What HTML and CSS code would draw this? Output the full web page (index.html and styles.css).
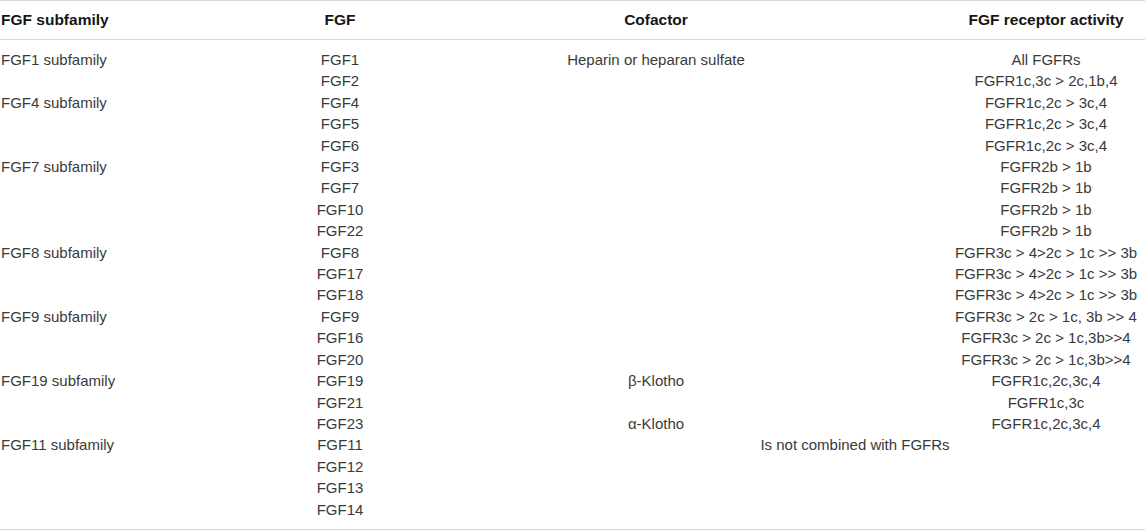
FILE: index.html
```html
<!DOCTYPE html>
<html lang="en">
<head>
<meta charset="utf-8">
<title>FGF subfamilies</title>
<link rel="stylesheet" href="styles.css">
</head>
<body>
<table class="fgf-table">
  <colgroup>
    <col class="c1">
    <col class="c2">
    <col class="c3">
    <col class="c4">
  </colgroup>
  <thead>
    <tr>
      <th class="left">FGF subfamily</th>
      <th>FGF</th>
      <th>Cofactor</th>
      <th>FGF receptor activity</th>
    </tr>
  </thead>
  <tbody>
    <tr class="first"><td class="left">FGF1 subfamily</td><td>FGF1</td><td>Heparin or heparan sulfate</td><td>All FGFRs</td></tr>
    <tr><td class="left"></td><td>FGF2</td><td></td><td>FGFR1c,3c &gt; 2c,1b,4</td></tr>
    <tr><td class="left">FGF4 subfamily</td><td>FGF4</td><td></td><td>FGFR1c,2c &gt; 3c,4</td></tr>
    <tr><td class="left"></td><td>FGF5</td><td></td><td>FGFR1c,2c &gt; 3c,4</td></tr>
    <tr><td class="left"></td><td>FGF6</td><td></td><td>FGFR1c,2c &gt; 3c,4</td></tr>
    <tr><td class="left">FGF7 subfamily</td><td>FGF3</td><td></td><td>FGFR2b &gt; 1b</td></tr>
    <tr><td class="left"></td><td>FGF7</td><td></td><td>FGFR2b &gt; 1b</td></tr>
    <tr><td class="left"></td><td>FGF10</td><td></td><td>FGFR2b &gt; 1b</td></tr>
    <tr><td class="left"></td><td>FGF22</td><td></td><td>FGFR2b &gt; 1b</td></tr>
    <tr><td class="left">FGF8 subfamily</td><td>FGF8</td><td></td><td>FGFR3c &gt; 4&gt;2c &gt; 1c &gt;&gt; 3b</td></tr>
    <tr><td class="left"></td><td>FGF17</td><td></td><td>FGFR3c &gt; 4&gt;2c &gt; 1c &gt;&gt; 3b</td></tr>
    <tr><td class="left"></td><td>FGF18</td><td></td><td>FGFR3c &gt; 4&gt;2c &gt; 1c &gt;&gt; 3b</td></tr>
    <tr><td class="left">FGF9 subfamily</td><td>FGF9</td><td></td><td>FGFR3c &gt; 2c &gt; 1c, 3b &gt;&gt; 4</td></tr>
    <tr><td class="left"></td><td>FGF16</td><td></td><td>FGFR3c &gt; 2c &gt; 1c,3b&gt;&gt;4</td></tr>
    <tr><td class="left"></td><td>FGF20</td><td></td><td>FGFR3c &gt; 2c &gt; 1c,3b&gt;&gt;4</td></tr>
    <tr><td class="left">FGF19 subfamily</td><td>FGF19</td><td>β-Klotho</td><td>FGFR1c,2c,3c,4</td></tr>
    <tr><td class="left"></td><td>FGF21</td><td></td><td>FGFR1c,3c</td></tr>
    <tr><td class="left"></td><td>FGF23</td><td>α-Klotho</td><td>FGFR1c,2c,3c,4</td></tr>
    <tr><td class="left">FGF11 subfamily</td><td>FGF11</td><td colspan="2" class="span">Is not combined with FGFRs</td></tr>
    <tr><td class="left"></td><td>FGF12</td><td></td><td></td></tr>
    <tr><td class="left"></td><td>FGF13</td><td></td><td></td></tr>
    <tr class="last"><td class="left"></td><td>FGF14</td><td></td><td></td></tr>
  </tbody>
</table>
</body>
</html>
```

FILE: styles.css
```css
html, body {
  margin: 0;
  padding: 0;
  background: #ffffff;
}

body {
  font-family: "Liberation Sans", Arial, sans-serif;
  font-size: 15px;
  color: #3a3a3a;
}

.fgf-table {
  width: 1145px;
  table-layout: fixed;
  border-collapse: collapse;
  border-top: 1px solid #d6d6d6;
  border-bottom: 1px solid #d6d6d6;
}

.c1 { width: 315px; }
.c2 { width: 50px; }
.c3 { width: 582px; }
.c4 { width: 198px; }

.fgf-table th {
  height: 38px;
  padding: 0;
  font-size: 15.5px;
  font-weight: bold;
  color: #161616;
  text-align: center;
  vertical-align: middle;
  white-space: nowrap;
  border-bottom: 1px solid #d6d6d6;
}

.fgf-table td {
  padding: 0;
  height: 21.4px;
  line-height: 21.4px;
  text-align: center;
  vertical-align: middle;
  white-space: nowrap;
}

.fgf-table th.left,
.fgf-table td.left {
  text-align: left;
  padding-left: 1px;
}

.fgf-table tr.first td {
  padding-top: 9px;
}

.fgf-table tr.last td {
  padding-bottom: 9px;
}

.fgf-table td.span {
  padding-left: 200px;
}
```
